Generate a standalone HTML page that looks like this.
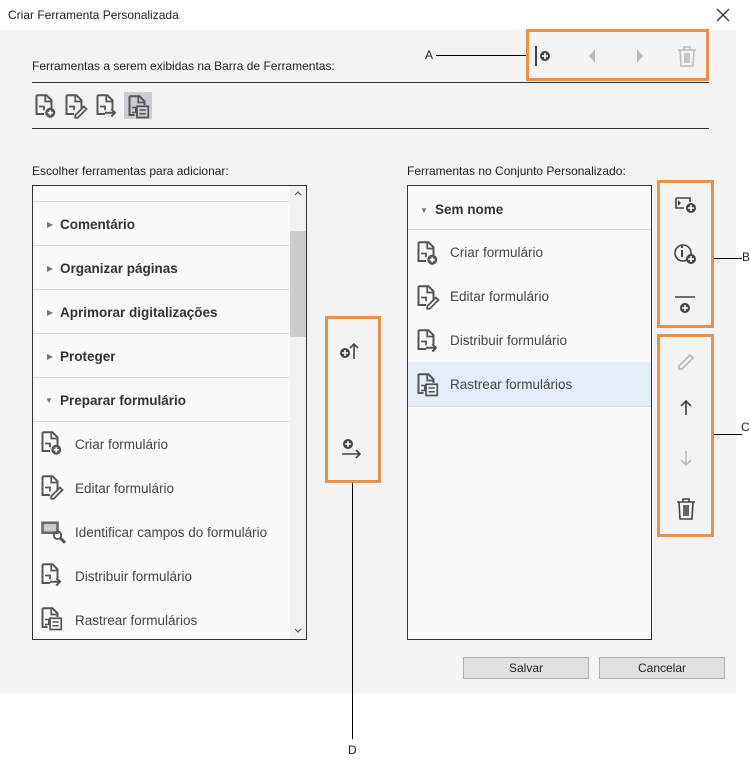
<!DOCTYPE html>
<html><head><meta charset="utf-8"><style>
*{margin:0;padding:0;box-sizing:border-box}
body{width:750px;height:762px;background:#fff;position:relative;font-family:"Liberation Sans",sans-serif;color:#222;overflow:hidden}
.a{position:absolute}
.t{font-size:12px;white-space:nowrap}
.bg{left:0;top:30px;width:736px;height:664px;background:#f3f3f3}
.box{background:#fafafa;border:1px solid #333}
.org{border:3px solid #e8914a}
.sep{position:absolute;height:1px;background:#d8d8d8}
.hd{font-size:13.5px;font-weight:bold;color:#333;white-space:nowrap}
.it{font-size:13.5px;color:#444;white-space:nowrap}
.btn{background:#e1e1e1;border:1px solid #adadad;font-size:12px;text-align:center;line-height:20px}
</style></head><body>
<svg width="0" height="0" style="position:absolute"><defs>
<g id="doc"><path d="M2 1h8l4 4v7M2 1v15h6" fill="none" stroke="#555" stroke-width="1.6"/><path d="M9 1v5h5" fill="none" stroke="#555" stroke-width="1.4"/><path d="M4 10h4v3" fill="none" stroke="#555" stroke-width="1.4"/></g>
<g id="cr0"><use href="#doc"/><circle cx="13" cy="15" r="4" fill="#555"/><path d="M11 15h4M13 13v4" stroke="#fff" stroke-width="1.4"/></g>
<g id="ed0"><use href="#doc"/><path d="M9 17l7-7 2 2-7 7h-2z" fill="none" stroke="#555" stroke-width="1.4"/></g>
<g id="di0"><use href="#doc"/><path d="M8 15h8M13 12l3 3-3 3" fill="none" stroke="#555" stroke-width="1.6"/></g>
<g id="ra0"><path d="M2 1h8l4 4v3M2 1v15h4" fill="none" stroke="#555" stroke-width="1.6"/><path d="M9 1v5h5" fill="none" stroke="#555" stroke-width="1.4"/><rect x="8" y="9" width="9" height="9" fill="none" stroke="#555" stroke-width="1.4"/><path d="M10 12h5M10 15h5M4 10h3v4h-3" stroke="#555" stroke-width="1.2" fill="none"/></g>
<g id="id0"><rect x="1" y="2" width="14" height="10" fill="#666"/><rect x="3" y="4" width="10" height="6" fill="#ccc"/><circle cx="14" cy="13" r="3" fill="none" stroke="#555" stroke-width="1.5"/><path d="M16 15l4 4" stroke="#555" stroke-width="2.4"/></g>
<g id="cr" transform="scale(1.25)"><use href="#cr0"/></g>
<g id="ed" transform="scale(1.25)"><use href="#ed0"/></g>
<g id="di" transform="scale(1.25)"><use href="#di0"/></g>
<g id="ra" transform="scale(1.25)"><use href="#ra0"/></g>
<g id="id" transform="scale(1.25)"><use href="#id0"/></g>
</defs></svg>
<div class="a t" style="left:8px;top:8px">Criar Ferramenta Personalizada</div>
<svg class="a" style="left:716px;top:8px" width="14" height="14"><path d="M1 1l12 12M13 1L1 13" stroke="#333" stroke-width="1.3"/></svg>
<div class="a bg"></div>
<div class="a t" style="left:32px;top:59px">Ferramentas a serem exibidas na Barra de Ferramentas:</div>
<div class="a" style="left:32px;top:82px;width:677px;height:1px;background:#333"></div>
<div class="a" style="left:32px;top:128px;width:677px;height:1px;background:#333"></div>
<svg class="a" style="left:34px;top:92px" width="130" height="28">
<use href="#cr" x="0" y="2"/><use href="#ed" x="30" y="2"/><use href="#di" x="61" y="2"/>
<rect x="90" y="0" width="28" height="27" fill="#c9ccd3"/><use href="#ra" x="93" y="3"/></svg>
<div class="a org" style="left:526px;top:29px;width:183px;height:52px"></div>
<div class="a t" style="left:425px;top:48px">A</div>
<div class="a" style="left:436px;top:55px;width:90px;height:1px;background:#000"></div>
<svg class="a" style="left:534px;top:44px" width="170" height="24">
<path d="M2 2v20" stroke="#444" stroke-width="2"/><circle cx="11" cy="12" r="5" fill="#444"/><path d="M8 12h6M11 9v6" stroke="#fff" stroke-width="1.6"/>
<path d="M61 5l-6 7 6 7z" fill="#bbb"/><path d="M103 5l6 7-6 7z" fill="#bbb"/>
<path d="M144 6h18M150 6v-3h6v3M146 6l1 16h12l1-16M151 9v10M153 9v10M155 9v10" fill="none" stroke="#bbb" stroke-width="1.6"/></svg>
<div class="a t" style="left:32px;top:164px">Escolher ferramentas para adicionar:</div>
<div class="a box" style="left:32px;top:185px;width:275px;height:455px;overflow:hidden">
<div class="a" style="left:257px;top:0;width:16px;height:453px;background:#f0f0f0"></div>
<div class="a" style="left:257px;top:45px;width:16px;height:106px;background:#cdcdcd"></div>
<svg class="a" style="left:261px;top:4px" width="8" height="6"><path d="M1 5l3-3 3 3" fill="none" stroke="#555" stroke-width="1.2"/></svg>
<svg class="a" style="left:261px;top:442px" width="8" height="6"><path d="M1 1l3 3 3-3" fill="none" stroke="#555" stroke-width="1.2"/></svg>
<div class="sep" style="left:0;top:15px;width:256px"></div>
<div class="sep" style="left:0;top:59px;width:256px"></div>
<div class="sep" style="left:0;top:103px;width:256px"></div>
<div class="sep" style="left:0;top:147px;width:256px"></div>
<div class="sep" style="left:0;top:191px;width:256px"></div>
<div class="sep" style="left:0;top:235px;width:256px"></div>
<div class="a" style="left:14px;top:34px;font-size:8px;color:#777">▶</div><div class="a hd" style="left:27px;top:31px">Comentário</div>
<div class="a" style="left:14px;top:78px;font-size:8px;color:#777">▶</div><div class="a hd" style="left:27px;top:75px">Organizar páginas</div>
<div class="a" style="left:14px;top:122px;font-size:8px;color:#777">▶</div><div class="a hd" style="left:27px;top:119px">Aprimorar digitalizações</div>
<div class="a" style="left:14px;top:166px;font-size:8px;color:#777">▶</div><div class="a hd" style="left:27px;top:163px">Proteger</div>
<div class="a" style="left:12px;top:210px;font-size:8px;color:#777">▼</div><div class="a hd" style="left:27px;top:207px">Preparar formulário</div>
<svg class="a" style="left:7px;top:245px" width="30" height="205"><use href="#cr" x="0" y="0"/><use href="#ed" x="0" y="44"/><use href="#id" x="0" y="88"/><use href="#di" x="0" y="132"/><use href="#ra" x="0" y="176"/></svg>
<div class="a it" style="left:42px;top:251px">Criar formulário</div>
<div class="a it" style="left:42px;top:295px">Editar formulário</div>
<div class="a it" style="left:42px;top:339px">Identificar campos do formulário</div>
<div class="a it" style="left:42px;top:383px">Distribuir formulário</div>
<div class="a it" style="left:42px;top:427px">Rastrear formulários</div>
</div>
<div class="a org" style="left:325px;top:316px;width:56px;height:167px"></div>
<svg class="a" style="left:338px;top:340px" width="30" height="130">
<circle cx="7" cy="13" r="5" fill="#444"/><path d="M4 13h6M7 10v6" stroke="#fff" stroke-width="1.6"/><path d="M16 19v-15M12 8l4-4 4 4" fill="none" stroke="#444" stroke-width="1.6"/>
<circle cx="10" cy="104" r="5" fill="#444"/><path d="M7 104h6M10 101v6" stroke="#fff" stroke-width="1.6"/><path d="M4 114h18M18 110l4 4-4 4" fill="none" stroke="#444" stroke-width="1.6"/></svg>
<div class="a" style="left:352px;top:483px;width:1px;height:256px;background:#000"></div>
<div class="a t" style="left:348px;top:743px">D</div>
<div class="a t" style="left:407px;top:164px">Ferramentas no Conjunto Personalizado:</div>
<div class="a box" style="left:407px;top:185px;width:245px;height:455px">
<div class="a" style="left:12px;top:20px;font-size:8px;color:#777">▼</div><div class="a hd" style="left:27px;top:16px">Sem nome</div>
<div class="sep" style="left:0;top:43px;width:243px"></div>
<div class="a" style="left:0;top:176px;width:243px;height:44px;background:#e5eef8"></div>
<div class="sep" style="left:0;top:220px;width:243px"></div>
<svg class="a" style="left:8px;top:55px" width="30" height="165"><use href="#cr" x="0" y="0"/><use href="#ed" x="0" y="44"/><use href="#di" x="0" y="88"/><use href="#ra" x="0" y="132"/></svg>
<div class="a it" style="left:42px;top:59px">Criar formulário</div>
<div class="a it" style="left:42px;top:103px">Editar formulário</div>
<div class="a it" style="left:42px;top:147px">Distribuir formulário</div>
<div class="a it" style="left:42px;top:191px">Rastrear formulários</div>
</div>
<div class="a org" style="left:657px;top:180px;width:57px;height:148px"></div>
<div class="a org" style="left:657px;top:334px;width:57px;height:203px"></div>
<svg class="a" style="left:670px;top:190px" width="32" height="340">
<path d="M6 8h14v4M6 8v10h8" fill="none" stroke="#444" stroke-width="1.6"/><path d="M8 10l3 3-3 3z" fill="#444"/><circle cx="21" cy="18" r="5" fill="#444"/><path d="M18 18h6M21 15v6" stroke="#fff" stroke-width="1.6"/>
<circle cx="13" cy="63" r="8" fill="none" stroke="#444" stroke-width="1.6"/><path d="M12 60v7" stroke="#444" stroke-width="2"/><circle cx="12" cy="57" r="1.2" fill="#444"/><circle cx="21" cy="69" r="5" fill="#444"/><path d="M18 69h6M21 66v6" stroke="#fff" stroke-width="1.6"/>
<path d="M5 107h20" stroke="#444" stroke-width="1.6"/><circle cx="15" cy="118" r="5" fill="#444"/><path d="M12 118h6M15 115v6" stroke="#fff" stroke-width="1.6"/>
<path d="M9 176l11-11 3 3-11 11h-3z" fill="none" stroke="#bbb" stroke-width="1.8"/>
<path d="M16 225v-14M11 216l5-5 5 5" fill="none" stroke="#444" stroke-width="1.6"/>
<path d="M16 261v14M11 270l5 5 5-5" fill="none" stroke="#bbb" stroke-width="1.6"/>
<path d="M7 312h18M13 312v-3h6v3M9 312l1 17h12l1-17M14 315v11M16 315v11M18 315v11" fill="none" stroke="#444" stroke-width="1.6"/></svg>
<div class="a" style="left:714px;top:258px;width:28px;height:1px;background:#000"></div>
<div class="a t" style="left:742px;top:250px">B</div>
<div class="a" style="left:714px;top:434px;width:28px;height:1px;background:#000"></div>
<div class="a t" style="left:741px;top:420px">C</div>
<div class="a btn" style="left:463px;top:657px;width:126px;height:22px">Salvar</div>
<div class="a btn" style="left:599px;top:657px;width:126px;height:22px">Cancelar</div>
</body></html>
